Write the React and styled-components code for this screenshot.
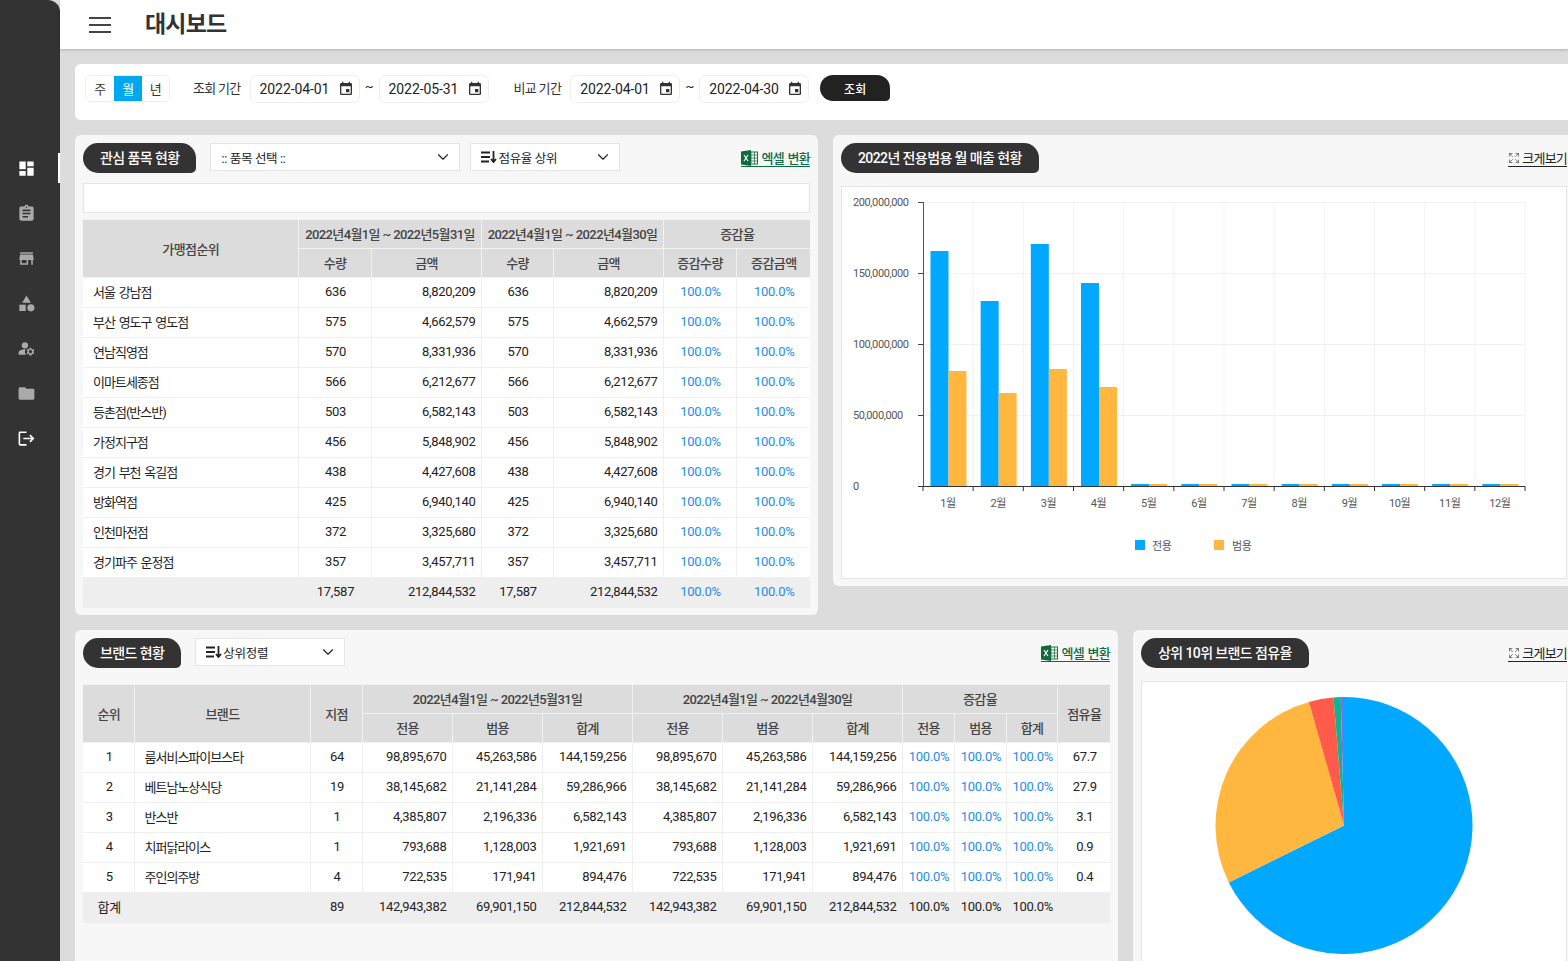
import React from 'react'
import styled, { createGlobalStyle } from 'styled-components'
import { MdDashboard, MdAssignment, MdStore, MdCategory, MdManageAccounts, MdFolder, MdLogout, MdEvent } from 'react-icons/md'
import { Expand, ChevronDown } from 'lucide-react'

const Global = createGlobalStyle`
  html, body { margin: 0; padding: 0; height: 100%; overflow: hidden; }
  body {
    background: #dcdcdc;
    color: #222;
    font-family: Roboto, "Noto Sans CJK KR", sans-serif;
    font-size: 13px;
    letter-spacing: -0.3px;
  }
  * { box-sizing: border-box; }
`

const Page = styled.div`
  display: grid;
  grid-template-columns: 60px 1fr;
  width: 1568px;
  height: 961px;
  overflow: hidden;
`

const Sidebar = styled.aside`
  background: #333;
  border-top-right-radius: 12px;
  padding-top: 153px;
  display: flex;
  flex-direction: column;
  gap: 15px;
`

const SideItem = styled.div`
  height: 30px;
  display: flex;
  align-items: center;
  justify-content: center;
  padding-right: 6px;
  font-size: 19px;
  color: ${p => (p.$on ? '#fff' : '#aaa')};
  border-right: 2px solid ${p => (p.$active ? '#fff' : 'transparent')};
`

const Main = styled.main`
  min-width: 0;
  display: flex;
  flex-direction: column;
`

const Header = styled.header`
  height: 49px;
  flex: none;
  background: #fff;
  box-shadow: 0 1px 3px rgba(0, 0, 0, 0.2);
  display: flex;
  align-items: center;
  padding-left: 29px;
  gap: 34px;
`

const Burger = styled.div`
  width: 22px;
  height: 16px;
  border-top: 2px solid #444;
  border-bottom: 2px solid #444;
  position: relative;
  &::after {
    content: '';
    position: absolute;
    left: 0;
    right: 0;
    top: 5px;
    height: 2px;
    background: #444;
  }
`

const Title = styled.h1`
  margin: -5px 0 0;
  font-size: 23px;
  font-weight: 700;
  letter-spacing: -0.8px;
  color: #333;
`

const Content = styled.div`
  width: 1530px;
  padding: 15px;
  display: flex;
  flex-direction: column;
  gap: 15px;
`

const FilterCard = styled.section`
  height: 56px;
  background: #fff;
  border-radius: 6px;
  padding: 11px 10px 0;
  display: flex;
  align-items: flex-start;
  font-size: 13px;
`

const Segment = styled.div`
  display: flex;
  height: 27px;
  border: 1px solid #eee;
  border-radius: 5px;
  overflow: hidden;
  margin-right: 23px;
`

const SegItem = styled.div`
  width: 28px;
  display: flex;
  align-items: center;
  justify-content: center;
  background: ${p => (p.$active ? '#00a8f0' : '#fff')};
  color: ${p => (p.$active ? '#fff' : '#333')};
  &:last-child { width: 27px; }
`

const FilterLabel = styled.span`
  line-height: 27px;
  margin: 0 9px 0 ${p => p.$left || 0}px;
  letter-spacing: -0.7px;
  color: #333;
`

const DateBox = styled.div`
  width: 110px;
  height: 28px;
  border: 1px solid #eee;
  border-radius: 6px;
  padding: 0 5px 0 9px;
  display: flex;
  align-items: center;
  justify-content: space-between;
  font-size: 14px;
  letter-spacing: -0.1px;
  color: #222;
  svg { font-size: 16px; color: #333; }
`

const Tilde = styled.span`
  width: 19px;
  text-align: center;
  line-height: 24px;
`

const SearchButton = styled.button`
  width: 70px;
  height: 26px;
  margin-left: 11px;
  border: 0;
  padding: 0;
  background: #222;
  color: #fff;
  border-radius: 15px 15px 5px 15px;
  font: inherit;
  font-size: 12px;
  font-weight: 500;
`

const Row = styled.div`
  display: grid;
  grid-template-columns: ${p => p.$cols};
  gap: 15px;
  align-items: start;
`

const Panel = styled.section`
  background: #f7f7f7;
  border-radius: 6px;
  padding: 8px 8px 7px;
  height: ${p => p.$h || 'auto'};
`

const PanelHead = styled.div`
  display: flex;
  align-items: flex-start;
  height: 30px;
`

const Pill = styled.h2`
  margin: 0 ${p => p.$gap || 0}px 0 0;
  height: 30px;
  padding: 0 17px 2px;
  display: flex;
  align-items: center;
  background: #333;
  color: #fff;
  font-size: 14px;
  font-weight: 500;
  letter-spacing: -0.6px;
  border-radius: 18px 18px 6px 18px;
  white-space: nowrap;
`

const Select = styled.div`
  width: ${p => p.$w}px;
  height: 28px;
  margin-right: 10px;
  background: #fff;
  border: 1px solid #e5e5e5;
  padding: 0 7px 0 10px;
  display: flex;
  align-items: center;
  gap: 1px;
  font-size: 12.5px;
  color: #222;
  span { flex: 1; }
`

const ExcelLink = styled.a`
  margin-left: auto;
  margin-top: 6px;
  height: 18px;
  display: flex;
  align-items: center;
  gap: 3px;
  color: #0b6b45;
  font-size: 13px;
  font-weight: 500;
  letter-spacing: -0.7px;
  word-spacing: 1px;
  border-bottom: 1px solid #0b6b45;
`

const BigLink = styled.a`
  margin-left: auto;
  margin-top: 6px;
  height: 18px;
  display: flex;
  align-items: center;
  gap: 2px;
  color: #222;
  font-size: 13px;
  letter-spacing: -0.8px;
  border-bottom: 1px solid #222;
  svg { color: #555; }
`

const EmptyBox = styled.div`
  height: 30px;
  margin: 10px 0 6px;
  background: #fff;
  border: 1px solid #e5e5e5;
`

const Table = styled.table`
  width: ${p => p.$w}px;
  margin-top: ${p => p.$top || 0}px;
  table-layout: fixed;
  border-collapse: collapse;
  background: #fff;
  font-size: 13px;
  th {
    height: 29px;
    padding: 0 0 2px 1px;
    background: #dcdcdc;
    border: 1px solid #f2f2f2;
    color: #444;
    font-weight: 500;
    letter-spacing: -0.6px;
    white-space: nowrap;
  }
  th[rowspan] { padding-bottom: 0; }
  td {
    height: 30px;
    padding: 0 4px 2px 6px;
    border: 1px solid #efefef;
    text-align: center;
    white-space: nowrap;
  }
  tr > *:first-child { border-left: 0; }
  tr > *:last-child { border-right: 0; }
`

const Name = styled.td`
  && {
    text-align: left;
    padding-left: 10px;
    letter-spacing: -1px;
    word-spacing: 1.5px;
  }
`

const Num = styled.td`
  && { text-align: right; padding: 0 5px 2px 0; }
`

const Pct = styled.td`
  && { color: ${p => (p.$plain ? '#222' : '#1f8ceb')}; }
`

const TotalRow = styled.tr`
  td { background: #eee; }
`

const ChartBox = styled.div`
  margin-top: 13px;
  background: #fff;
  border: 1px solid #e5e5e5;
  height: ${p => p.$h}px;
  svg { display: block; }
  text {
    font-family: Roboto, "Noto Sans CJK KR", sans-serif;
    font-size: 11px;
    letter-spacing: -0.4px;
    fill: #555;
  }
`

const Calendar = () => <MdEvent />

const SortIcon = () => (
  <svg width="16" height="12" viewBox="0 0 16 12" fill="none" stroke="#222" strokeWidth="1.8">
    <path d="M0 1.5h9M0 6h9M0 10.5h8" />
    <path d="M12.5 0v10.5M10 8l2.5 3 2.5-3" />
  </svg>
)

const ExcelIcon = () => (
  <svg width="17" height="16" viewBox="0 0 17 16">
    <rect x="6" y="2" width="10.5" height="12" fill="#fff" stroke="#1d7044" />
    <path d="M10 2v12M13.5 2v12M6 5h11M6 8h11M6 11h11" stroke="#1d7044" strokeWidth="0.8" />
    <path d="M0 1.5 10 0v16L0 14.5z" fill="#0f6b3f" />
    <path d="M3 5l4 6M7 5l-4 6" stroke="#fff" strokeWidth="1.2" />
  </svg>
)

const Excel = () => (
  <ExcelLink><ExcelIcon />엑셀 변환</ExcelLink>
)

const BigView = () => (
  <BigLink><Expand size={12} strokeWidth={1.5} />크게보기</BigLink>
)

const stores = [
  ['서울 강남점', '636', '8,820,209'],
  ['부산 영도구 영도점', '575', '4,662,579'],
  ['연남직영점', '570', '8,331,936'],
  ['이마트세종점', '566', '6,212,677'],
  ['등촌점(반스반)', '503', '6,582,143'],
  ['가정지구점', '456', '5,848,902'],
  ['경기 부천 옥길점', '438', '4,427,608'],
  ['방화역점', '425', '6,940,140'],
  ['인천마전점', '372', '3,325,680'],
  ['경기파주 운정점', '357', '3,457,711'],
]

const brands = [
  ['1', '룸서비스파이브스타', '64', '98,895,670', '45,263,586', '144,159,256', '67.7'],
  ['2', '베트남노상식당', '19', '38,145,682', '21,141,284', '59,286,966', '27.9'],
  ['3', '반스반', '1', '4,385,807', '2,196,336', '6,582,143', '3.1'],
  ['4', '치퍼닭라이스', '1', '793,688', '1,128,003', '1,921,691', '0.9'],
  ['5', '주인의주방', '4', '722,535', '171,941', '894,476', '0.4'],
]

const PCT = '100.0%'

function StoreTable() {
  const cols = [215, 73, 110, 72, 110, 73, 74]
  return (
    <Table $w={727}>
      <colgroup>{cols.map((w, i) => <col key={i} width={w} />)}</colgroup>
      <thead>
        <tr>
          <th rowSpan={2}>가맹점순위</th>
          <th colSpan={2}>2022년4월1일 ~ 2022년5월31일</th>
          <th colSpan={2}>2022년4월1일 ~ 2022년4월30일</th>
          <th colSpan={2}>증감율</th>
        </tr>
        <tr>
          <th>수량</th><th>금액</th><th>수량</th><th>금액</th><th>증감수량</th><th>증감금액</th>
        </tr>
      </thead>
      <tbody>
        {stores.map(s => (
          <tr key={s[0]}>
            <Name>{s[0]}</Name>
            <td>{s[1]}</td>
            <Num>{s[2]}</Num>
            <td>{s[1]}</td>
            <Num>{s[2]}</Num>
            <Pct>{PCT}</Pct>
            <Pct>{PCT}</Pct>
          </tr>
        ))}
        <TotalRow>
          <td></td>
          <td>17,587</td>
          <Num>212,844,532</Num>
          <td>17,587</td>
          <Num>212,844,532</Num>
          <Pct>{PCT}</Pct>
          <Pct>{PCT}</Pct>
        </TotalRow>
      </tbody>
    </Table>
  )
}

function BrandTable() {
  const cols = [51, 176, 52, 90, 90, 90, 90, 90, 90, 52, 52, 51, 53]
  return (
    <Table $w={1027} $top={16}>
      <colgroup>{cols.map((w, i) => <col key={i} width={w} />)}</colgroup>
      <thead>
        <tr>
          <th rowSpan={2}>순위</th>
          <th rowSpan={2}>브랜드</th>
          <th rowSpan={2}>지점</th>
          <th colSpan={3}>2022년4월1일 ~ 2022년5월31일</th>
          <th colSpan={3}>2022년4월1일 ~ 2022년4월30일</th>
          <th colSpan={3}>증감율</th>
          <th rowSpan={2}>점유율</th>
        </tr>
        <tr>
          <th>전용</th><th>범용</th><th>합계</th>
          <th>전용</th><th>범용</th><th>합계</th>
          <th>전용</th><th>범용</th><th>합계</th>
        </tr>
      </thead>
      <tbody>
        {brands.map(b => (
          <tr key={b[0]}>
            <td>{b[0]}</td>
            <Name>{b[1]}</Name>
            <td>{b[2]}</td>
            <Num>{b[3]}</Num><Num>{b[4]}</Num><Num>{b[5]}</Num>
            <Num>{b[3]}</Num><Num>{b[4]}</Num><Num>{b[5]}</Num>
            <Pct>{PCT}</Pct><Pct>{PCT}</Pct><Pct>{PCT}</Pct>
            <td>{b[6]}</td>
          </tr>
        ))}
        <TotalRow>
          <td>합계</td>
          <td></td>
          <td>89</td>
          <Num>142,943,382</Num><Num>69,901,150</Num><Num>212,844,532</Num>
          <Num>142,943,382</Num><Num>69,901,150</Num><Num>212,844,532</Num>
          <Pct $plain>{PCT}</Pct><Pct $plain>{PCT}</Pct><Pct $plain>{PCT}</Pct>
          <td></td>
        </TotalRow>
      </tbody>
    </Table>
  )
}

// 좌표는 차트 박스 안쪽 기준
const BLUE = '#00a8ff'
const ORANGE = '#ffb73f'
const AX = 81
const AW = 602
const TOP = 15
const BASE = 299
const blueTops = [251, 301, 244, 283].map(v => v - 187)
const orangeTops = [371, 393, 369, 387].map(v => v - 187)

function BarChart() {
  const step = AW / 12
  const months = Array.from({ length: 12 }, (_, i) => i)
  const yTicks = [['200,000,000', 0], ['150,000,000', 1], ['100,000,000', 2], ['50,000,000', 3], ['0', 4]]
  return (
    <svg width="724" height="391" viewBox="0 0 724 391">
      {yTicks.map(([label, i]) => {
        const y = TOP + i * 71
        return (
          <g key={label}>
            {i < 4 && <line x1={AX} x2={AX + AW} y1={y + 0.5} y2={y + 0.5} stroke="#f0f0f0" />}
            <line x1={AX - 5} x2={AX} y1={y + 0.5} y2={y + 0.5} stroke="#444" />
            <text x="11" y={y + 4}>{label}</text>
          </g>
        )
      })}
      {months.map(i => {
        const x = AX + i * step
        const bt = blueTops[i] ?? BASE - 2
        const ot = orangeTops[i] ?? BASE - 2
        return (
          <g key={i}>
            <line x1={x + step} x2={x + step} y1={TOP} y2={BASE} stroke="#f2f2f2" />
            <line x1={x} x2={x} y1={BASE} y2={BASE + 5} stroke="#333" />
            <rect x={x + 7.5} y={bt} width="18" height={BASE - bt} fill={BLUE} />
            <rect x={x + 25.5} y={ot} width="18" height={BASE - ot} fill={ORANGE} />
            <text x={x + step / 2} y={BASE + 21} textAnchor="middle">{i + 1}월</text>
          </g>
        )
      })}
      <line x1={AX + AW} x2={AX + AW} y1={BASE} y2={BASE + 5} stroke="#333" />
      <line x1={AX + 0.5} x2={AX + 0.5} y1={TOP} y2={BASE} stroke="#555" />
      <line x1={AX - 5} x2={AX + AW} y1={BASE + 0.5} y2={BASE + 0.5} stroke="#333" />
      <rect x="293" y="353" width="10" height="10" fill={BLUE} />
      <text x="310" y="363">전용</text>
      <rect x="372" y="353" width="10" height="10" fill={ORANGE} />
      <text x="390" y="363">범용</text>
    </svg>
  )
}

const slices = [
  [67.7, '#00a8ff'],
  [27.9, '#ffb73f'],
  [3.1, '#ff5a4a'],
  [0.9, '#13b091'],
  [0.4, '#7a6cf5'],
]

function PieChart() {
  const cx = 202
  const cy = 143.5
  const r = 128.5
  let acc = 0
  const pt = a => {
    const t = (a / 100) * Math.PI * 2
    return `${(cx + r * Math.sin(t)).toFixed(2)} ${(cy - r * Math.cos(t)).toFixed(2)}`
  }
  return (
    <svg width="424" height="300" viewBox="0 0 424 300">
      {slices.map(([v, c]) => {
        const from = acc
        acc += v
        return (
          <path
            key={c}
            d={`M${cx} ${cy}L${pt(from)}A${r} ${r} 0 ${v > 50 ? 1 : 0} 1 ${pt(acc)}Z`}
            fill={c}
          />
        )
      })}
    </svg>
  )
}

export default function App() {
  return (
    <Page>
      <Global />
      <Sidebar>
        <SideItem $active $on><MdDashboard /></SideItem>
        <SideItem><MdAssignment /></SideItem>
        <SideItem><MdStore /></SideItem>
        <SideItem><MdCategory /></SideItem>
        <SideItem><MdManageAccounts /></SideItem>
        <SideItem><MdFolder /></SideItem>
        <SideItem $on><MdLogout /></SideItem>
      </Sidebar>
      <Main>
        <Header>
          <Burger />
          <Title>대시보드</Title>
        </Header>
        <Content>
          <FilterCard>
            <Segment>
              <SegItem>주</SegItem>
              <SegItem $active>월</SegItem>
              <SegItem>년</SegItem>
            </Segment>
            <FilterLabel>조회 기간</FilterLabel>
            <DateBox>2022-04-01<Calendar /></DateBox>
            <Tilde>~</Tilde>
            <DateBox>2022-05-31<Calendar /></DateBox>
            <FilterLabel $left={25}>비교 기간</FilterLabel>
            <DateBox>2022-04-01<Calendar /></DateBox>
            <Tilde>~</Tilde>
            <DateBox>2022-04-30<Calendar /></DateBox>
            <SearchButton>조회</SearchButton>
          </FilterCard>
          <Row $cols="743px 742px">
            <Panel>
              <PanelHead>
                <Pill $gap={14}>관심 품목 현황</Pill>
                <Select $w={250}><span>:: 품목 선택 ::</span><ChevronDown size={18} strokeWidth={1.5} /></Select>
                <Select $w={150}><SortIcon /><span>점유율 상위</span><ChevronDown size={18} strokeWidth={1.5} /></Select>
                <Excel />
              </PanelHead>
              <EmptyBox />
              <StoreTable />
            </Panel>
            <Panel>
              <PanelHead>
                <Pill>2022년 전용범용 월 매출 현황</Pill>
                <BigView />
              </PanelHead>
              <ChartBox $h={393}><BarChart /></ChartBox>
            </Panel>
          </Row>
          <Row $cols="1043px 442px">
            <Panel $h="340px">
              <PanelHead>
                <Pill $gap={14}>브랜드 현황</Pill>
                <Select $w={150}><SortIcon /><span>상위정렬</span><ChevronDown size={18} strokeWidth={1.5} /></Select>
                <Excel />
              </PanelHead>
              <BrandTable />
            </Panel>
            <Panel $h="340px">
              <PanelHead>
                <Pill>상위 10위 브랜드 점유율</Pill>
                <BigView />
              </PanelHead>
              <ChartBox $h={300}><PieChart /></ChartBox>
            </Panel>
          </Row>
        </Content>
      </Main>
    </Page>
  )
}
